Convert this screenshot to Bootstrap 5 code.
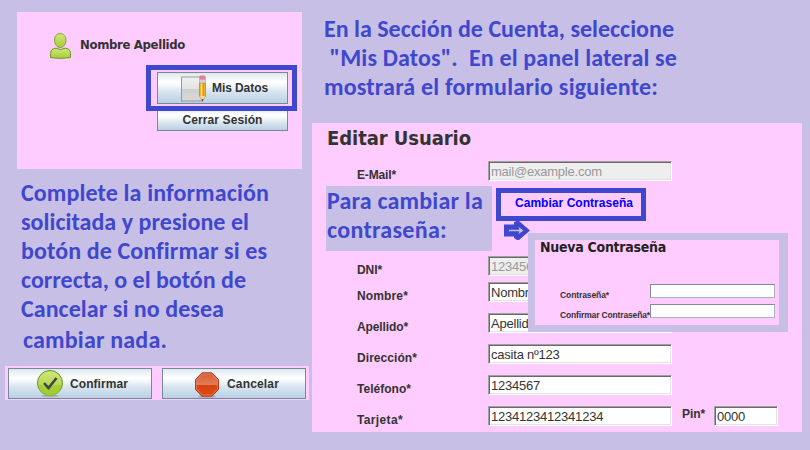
<!DOCTYPE html>
<html lang="es">
<head>
<meta charset="utf-8">
<title>Editar Usuario</title>
<link href="https://cdn.jsdelivr.net/npm/bootstrap@5.3.0/dist/css/bootstrap.min.css" rel="stylesheet">
<style>
  body { width: 810px; height: 450px; background: #c8bfe7; color: #333; font-family: "Liberation Sans", Arial, sans-serif; font-size: 12px; line-height: 20px; }
  .panel { background: #fcf; }
  .left-side { width: 312px; }
  .note { font: 700 24px/29px Carlito, Lato, sans-serif; color: #3f48cc; }
  .note > div { height: 29px; }
  .note > .last-line { padding: 2px 0 0 2px; }
  [data-w] { display: inline-block; white-space: pre; }
  .account { width: 285px; height: 157px; margin: 12px 0 0 17px; padding: 21px 5px 0 33px; }
  .user-name { font: 700 13px/20px "DejaVu Sans Condensed", "DejaVu Sans", Tahoma, sans-serif; padding-left: 9px; padding-top: 2px; }
  .marked { border: 5px solid #3f48cc; }
  .marked.data-box { width: 151px; height: 46px; padding: 2px 4px 2px 6px; margin-top: 6px; }
  .steel { border: 1px solid #778899; border-radius: 0; padding: 0; color: #333; font: 700 12px/18px "Liberation Sans", Arial, sans-serif; background: linear-gradient(#dce8f0 0%, #fff 30%, #f4f8fb 42%, #dae6f0 60%, #b9d0e4 100%); }
  .steel.tall { width: 131px; height: 32px; }
  .steel.logout { width: 131px; height: 20px; margin-right: 9px; border-top: 0; line-height: 17px; background: linear-gradient(#e8f0f5 0%, #fff 18%, #f4f8fb 38%, #dae6f0 60%, #b9d0e4 100%); }
  .steel.action { width: 144px; height: 31px; }
  .note-icon { margin: 0 5px 0 -1px; }
  .check-icon { margin: 0 6px 0 27px; }
  .stop-icon { margin: 3px 7px 0 31px; }
  .left-note { padding: 9px 0 0 21px; height: 197px; }
  .strip { width: 304px; height: 34px; margin-left: 5px; padding: 2px 3px; }
  .right-side { width: 490px; }
  .top-note { height: 123px; padding: 14px 0 0 12px; }
  .edit-form { height: 309px; padding-left: 15px; }
  .form-title { font: 700 20px/28px "DejaVu Sans Condensed", "DejaVu Sans", Tahoma, sans-serif; height: 38px; padding-top: 1px; }
  .field-row { height: 20px; margin-bottom: 11px; padding-left: 30px; }
  .field-row.dni-row { margin-bottom: 6px; }
  .field-row label { width: 131px; font-weight: 700; padding-top: 4px; line-height: 20px; }
  .field-row label.pin { width: 32px; margin-left: 10px; padding-top: 0; margin-top: -2px; }
  .sunken { width: 184px; height: 20px; border-radius: 0; padding: 1px 2px 0 2px; font-size: 13px; line-height: 16px; letter-spacing: -.22px; color: #333; background: #fff; border: 1px solid; border-color: #a0a0a0 #fff #fff #a0a0a0; box-shadow: inset 1px 1px #696969, inset -1px -1px #e3e3e3; }
  .sunken:disabled { background: #eee; color: #999; opacity: 1; }
  .sunken.short { width: 64px; }
  .change-row { height: 70px; margin-top: -6px; }
  .hint { width: 166px; height: 65px; margin-left: -1px; background: #c8bfe7; }
  .change-row .hint { height: 65px; padding-left: 1px; }
  .link-box { width: 150px; height: 33px; margin: 2px 0 0 4px; padding-left: 14px; font-weight: 700; color: #00f; line-height: 20px; }
  .arrow { left: 192px; top: 98px; }
  .popup { left: 216px; top: 110px; width: 260px; height: 99px; padding: 7px 9px 7px 7px; background: #c8bfe7; }
  .popup .panel { height: 85px; padding: 0 4px 0 5px; }
  .popup-title { font: 700 14px/14px "DejaVu Sans Condensed", "DejaVu Sans", Tahoma, sans-serif; color: #222; height: 44px; }
  .mini-row { height: 14px; margin-bottom: 6px; padding-left: 20px; }
  .mini-row label { width: 90px; font-weight: 700; font-size: 8.5px; line-height: 14px; padding-top: 4px; }
  .mini-row input { width: 125px; height: 14px; padding: 0; border: 1px solid #a9b2bb; border-top-color: #7f8b96; border-left-color: #7f8b96; border-radius: 0; background: #fff; }
</style>
</head>
<body class="d-flex overflow-hidden">
<div class="left-side flex-shrink-0">
  <section class="account panel">
    <div class="d-flex">
      <svg width="21" height="26" viewBox="0 0 21 26">
        <defs><linearGradient id="lime" x2="0" y2="1"><stop offset="0" stop-color="#d2e77c"/><stop offset="1" stop-color="#a4cd36"/></linearGradient></defs>
        <path d="M.6 24.600V20.500Q.6 15.500 6 15.200Q10.500 18 15 15.200Q20.500 15.500 20.500 20.500V24.600Q10.500 26.200.6 24.600Z" fill="url(#lime)" stroke="#6d9620"/>
        <path d="M10.300.6C14 .6 16 3.500 16 7.200C16 11 13.500 14.600 10.300 14.600S4.500 11 4.500 7.200C4.500 3.500 6.500.6 10.300.6Z" fill="url(#lime)" stroke="#7ea32a"/>
      </svg>
      <div class="user-name"><span data-w="105">Nombre Apellido</span></div>
    </div>
    <div class="d-flex flex-column align-items-end">
      <div class="marked data-box">
        <button class="btn steel tall d-flex align-items-center ps-4">
          <svg width="26" height="27" viewBox="0 0 26 27" class="note-icon">
            <defs><linearGradient id="page" x2="0" y2="1"><stop stop-color="#f1f1f1"/><stop offset=".5" stop-color="#e2e2e2"/><stop offset=".52" stop-color="#cfcfcf"/><stop offset="1" stop-color="#d9d9d9"/></linearGradient></defs>
            <rect x=".5" y="2" width="21" height="24" fill="url(#page)" stroke="#999"/>
            <path d="M18.500 8H24.500V21L21.500 26L18.500 21Z" fill="#f6b530" stroke="#c88318" stroke-width=".8"/>
            <path d="M20.600 8V21" stroke="#ffe08a"/><path d="M22.700 8V21" stroke="#d88b1c"/>
            <path d="M18.600 21H24.400L21.500 26Z" fill="#f4d7a0"/><path d="M20.600 24.200H22.400L21.500 26.400Z" fill="#333"/>
            <rect x="18.400" y="4" width="6.200" height="4" fill="#d3d3d3" stroke="#999" stroke-width=".5"/>
            <rect x="18.300" y=".4" width="6.400" height="4" rx="1.500" fill="#f27695"/>
          </svg>
          <span data-w="56">Mis Datos</span>
        </button>
      </div>
      <button class="btn steel logout"><span data-w="80">Cerrar Sesión</span></button>
    </div>
  </section>
  <section class="note left-note">
    <div><span data-w="248">Complete la información</span></div>
    <div><span data-w="228">solicitada y presione el</span></div>
    <div><span data-w="246">botón de Confirmar si es</span></div>
    <div><span data-w="225">correcta, o el botón de</span></div>
    <div><span data-w="203">Cancelar si no desea</span></div>
    <div class="last-line"><span data-w="144">cambiar nada.</span></div>
  </section>
  <section class="strip panel d-flex justify-content-between">
    <button class="btn steel action d-flex align-items-center">
      <svg class="check-icon" width="28" height="28" viewBox="0 0 28 28">
        <ellipse cx="14" cy="26" rx="9" ry="1.500" fill="#8fa0ad" opacity=".6"/>
        <circle cx="14" cy="13" r="12.500" fill="url(#lime)" stroke="#629022"/>
        <path d="M2.500 14.500Q14 16.500 25.500 14.500A11.500 11.500 0 0 1 2.500 14.500Z" fill="#9fca2e" opacity=".7"/>
        <path d="M8 13L12.500 18L20.500 8" fill="none" stroke="#444" stroke-width="2.600"/>
      </svg>
      <span data-w="58">Confirmar</span>
    </button>
    <button class="btn steel action d-flex align-items-center">
      <svg class="stop-icon" width="26" height="26" viewBox="0 0 26 26">
        <defs><linearGradient id="stop" x2="0" y2="1"><stop stop-color="#d95a34"/><stop offset=".5" stop-color="#e17c55"/><stop offset=".52" stop-color="#d6430f"/><stop offset="1" stop-color="#dc4a14"/></linearGradient></defs>
        <ellipse cx="13" cy="24.500" rx="9" ry="1.400" fill="#8fa0ad" opacity=".7"/>
        <path d="M8 .8H18L24.500 7.500V17.500L18 24.200H8L1.500 17.500V7.500Z" fill="url(#stop)" stroke="#b03a17"/>
        <path d="M8.500 2H17.500L23.400 8V17L17.500 23H8.500L2.600 17V8Z" fill="none" stroke="#eb8e6c" stroke-width=".7"/>
      </svg>
      <span data-w="52">Cancelar</span>
    </button>
  </section>
</div>
<main class="right-side flex-shrink-0">
  <section class="note top-note">
    <div><span data-w="350">En la Sección de Cuenta, seleccione</span></div>
    <div><span data-w="353"> "Mis Datos".  En el panel lateral se</span></div>
    <div><span data-w="334">mostrará el formulario siguiente:</span></div>
  </section>
  <form class="edit-form panel position-relative">
    <h1 class="form-title mb-0"><span data-w="144">Editar Usuario</span></h1>
    <div class="field-row d-flex"><label><span data-w="39">E-Mail*</span></label><input class="sunken" value="mail@example.com" disabled></div>
    <div class="change-row d-flex">
      <div class="hint note"><div><span data-w="156">Para cambiar la</span></div><div><span data-w="120">contraseña:</span></div></div>
      <div class="link-box marked"><span data-w="118">Cambiar Contraseña</span></div>
    </div>
    <div class="field-row dni-row d-flex"><label><span data-w="25">DNI*</span></label><input class="sunken" value="12345678" disabled></div>
    <div class="field-row d-flex"><label><span data-w="51">Nombre*</span></label><input class="sunken" value="Nombre"></div>
    <div class="field-row d-flex"><label><span data-w="51">Apellido*</span></label><input class="sunken" value="Apellido"></div>
    <div class="field-row d-flex"><label><span data-w="60">Dirección*</span></label><input class="sunken" value="casita nº123"></div>
    <div class="field-row d-flex"><label><span data-w="54">Teléfono*</span></label><input class="sunken" value="1234567"></div>
    <div class="field-row d-flex"><label><span data-w="46">Tarjeta*</span></label><input class="sunken" value="1234123412341234"><label class="pin"><span data-w="23">Pin*</span></label><input class="sunken short" value="0000"></div>
    <svg class="arrow position-absolute" width="27" height="20" viewBox="0 0 27 20"><path d="M0 3.500H10V1L13 0H15L26 9.500L15 19H13L10 17V15.500H0Z" fill="#3f48cc"/><path d="M5 9.500H17" stroke="#c8bfe7" stroke-width="1.500"/><path d="M14.500 6L19.500 9.500L14.500 13L15.500 9.500Z" fill="#c8bfe7"/></svg>
    <aside class="popup position-absolute">
      <div class="panel">
        <h2 class="popup-title mb-0"><span data-w="126">Nueva Contraseña</span></h2>
        <div class="mini-row d-flex"><label><span data-w="49">Contraseña*</span></label><input></div>
        <div class="mini-row d-flex"><label><span data-w="90">Confirmar Contraseña*</span></label><input></div>
      </div>
    </aside>
  </form>
</main>
<script src="https://cdn.jsdelivr.net/npm/bootstrap@5.3.0/dist/js/bootstrap.bundle.min.js"></script>
<script>
  // Track each label out to its nominal width
  document.querySelectorAll('[data-w]').forEach(el => {
    const extra = el.dataset.w - el.getBoundingClientRect().width;
    el.style.letterSpacing = extra / el.textContent.length + 'px';
  });
</script>
</body>
</html>
